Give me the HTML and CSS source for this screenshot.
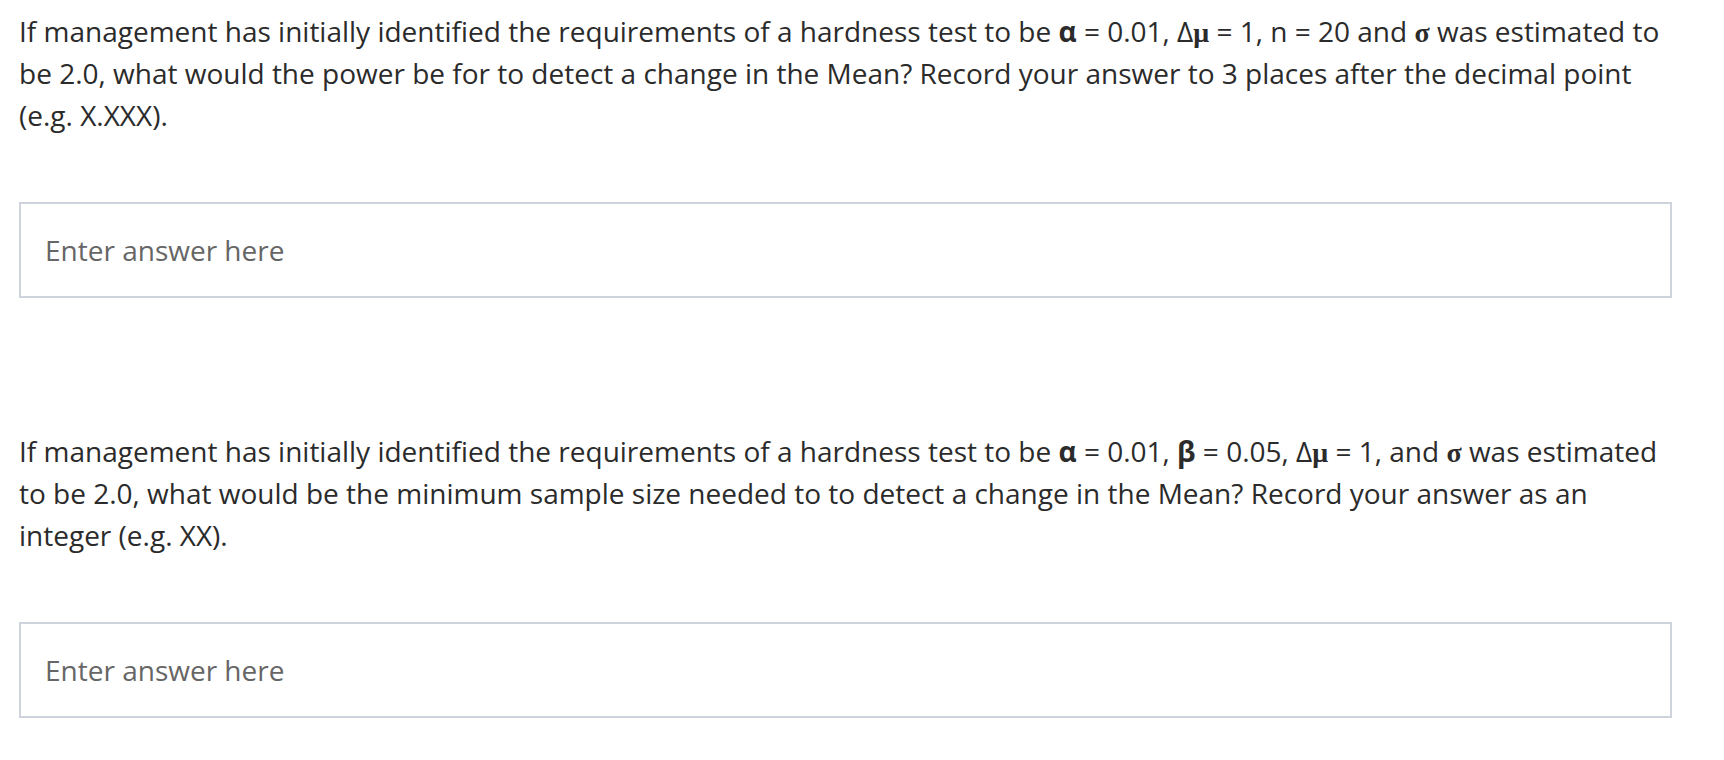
FILE: index.html
```html
<!DOCTYPE html>
<html>
<head>
<meta charset="utf-8">
<link rel="stylesheet" href="styles.css">
</head>
<body>
<div class="page">
  <div class="question">
    <p class="prompt">If management has initially identified the requirements of a hardness test to be <strong class="sym">α</strong> = 0.01, Δ<span class="serif">μ</span> = 1, n = 20 and <strong class="serif">σ</strong> was estimated to be 2.0, what would the power be for to detect a change in the Mean? Record your answer to 3 places after the decimal point (e.g. X.XXX).</p>
    <input class="answer" type="text" placeholder="Enter answer here">
  </div>
  <div class="question second">
    <p class="prompt">If management has initially identified the requirements of a hardness test to be <strong class="sym">α</strong> = 0.01, <strong class="sym">β</strong> = 0.05, Δ<span class="serif">μ</span> = 1, and <strong class="serif">σ</strong> was estimated to be 2.0, what would be the minimum sample size needed to to detect a change in the Mean? Record your answer as an integer (e.g. XX).</p>
    <input class="answer" type="text" placeholder="Enter answer here">
  </div>
</div>
</body>
</html>
```
FILE: styles.css
```css
html, body {
  margin: 0;
  padding: 0;
  background: #ffffff;
}
.page {
  padding: 10px 0 0 19px;
  width: 1653px;
  font-family: "Open Sans", "Liberation Sans", sans-serif;
  color: #2b2b2b;
}
.question {
  display: flex;
  flex-direction: column;
}
.second {
  margin-top: 132px;
}
.prompt {
  margin: 0;
  font-size: 28px;
  line-height: 42px;
}
.sym {
  font-weight: 700;
  line-height: 1;
}
.serif {
  font-family: "Liberation Serif", serif;
  font-weight: 700;
  line-height: 1;
}
.answer {
  margin-top: 66px;
  box-sizing: border-box;
  width: 1653px;
  height: 96px;
  border: 2px solid #cfd3db;
  border-radius: 0;
  padding: 0 24px;
  font-family: "Open Sans", "Liberation Sans", sans-serif;
  font-size: 28px;
  color: #2b2b2b;
  background: #ffffff;
  outline: none;
}
.answer::placeholder {
  color: #666666;
}
```
